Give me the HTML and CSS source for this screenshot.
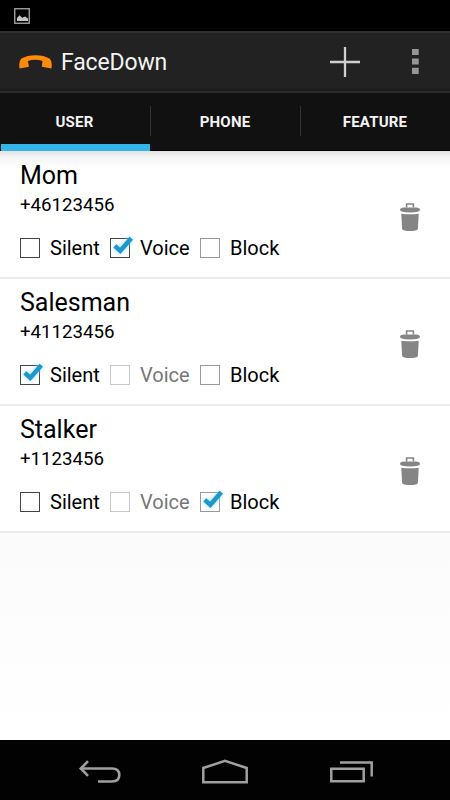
FILE: index.html
```html
<!DOCTYPE html>
<html lang="en">
<head>
    <meta charset="UTF-8">
    <meta name="viewport" content="width=device-width, initial-scale=1.0">
    <title>FaceDown</title>
    <link rel="stylesheet" href="styles.css">
</head>
<body>
    <svg class="symbols" width="0" height="0">
        <symbol id="check" viewBox="0 0 24 24">
            <path d="M3.8 10.8 L9.3 15.8 L20.3 3.3" fill="none" stroke="#1c98cb" stroke-width="4.4"/>
        </symbol>
        <symbol id="trash" viewBox="0 0 20 28">
            <path d="M6.6 4.5 V1 H13.4 V4.5" fill="none" stroke="#858585" stroke-width="1.6"/>
            <path d="M0 7 Q0 5 4 4.6 H16 Q20 5 20 7 Q20 9.2 10 9.4 Q0 9.2 0 7 Z" fill="#858585"/>
            <path d="M1.3 10.7 Q10 12 18.7 10.7 L17.9 26 Q17 28 10 28 Q3 28 2.1 26 Z" fill="#858585"/>
        </symbol>
    </svg>

    <div class="status-bar">
        <svg width="16" height="16" viewBox="0 0 16 16">
            <rect x="0.75" y="0.75" width="14.5" height="14.5" fill="none" stroke="#aaa" stroke-width="1.3"/>
            <path d="M3 13 V10 L5.5 7.2 L8.3 9.8 L11 8.6 L14 10.6 V13 Z" fill="#c4c4c4"/>
        </svg>
    </div>

    <header class="action-bar">
        <svg class="logo" width="33" height="14" viewBox="0 0 33 14">
            <path d="M0.5 13.4 Q-0.6 6.5 2.5 3.6 Q8 0.2 16.5 0.2 Q25 0.2 30.5 3.6 Q33.6 6.5 32.5 13.4 L22.8 11.8 L23.5 6 Q16.5 3.6 8.8 6 L10 11.8 Z" fill="#ff8a0c"/>
        </svg>
        <h1>FaceDown</h1>
        <svg class="add" width="30" height="30" viewBox="0 0 30 30">
            <path d="M15 0 V30 M0 15 H30" stroke="#d0d0d0" stroke-width="2.3"/>
        </svg>
        <svg class="more" width="7" height="26" viewBox="0 0 7 26">
            <path d="M0 0 H6.7 V6 H0 Z M0 9.4 H6.7 V15.4 H0 Z M0 18.8 H6.7 V25 H0 Z" fill="#969696"/>
        </svg>
    </header>

    <nav class="tabs">
        <div class="tab active">USER</div>
        <div class="tab">PHONE</div>
        <div class="tab">FEATURE</div>
    </nav>

    <main>
        <div class="contact">
            <div class="info">
                <div class="name">Mom</div>
                <div class="number">+46123456</div>
                <div class="options">
                    <div class="option"><span class="box"></span>Silent</div>
                    <div class="option"><span class="box"><svg class="tick"><use href="#check"/></svg></span>Voice</div>
                    <div class="option"><span class="box gray"></span>Block</div>
                </div>
            </div>
            <svg class="trash"><use href="#trash"/></svg>
        </div>
        <div class="contact">
            <div class="info">
                <div class="name">Salesman</div>
                <div class="number">+41123456</div>
                <div class="options">
                    <div class="option"><span class="box"><svg class="tick"><use href="#check"/></svg></span>Silent</div>
                    <div class="option disabled"><span class="box"></span>Voice</div>
                    <div class="option"><span class="box gray"></span>Block</div>
                </div>
            </div>
            <svg class="trash"><use href="#trash"/></svg>
        </div>
        <div class="contact">
            <div class="info">
                <div class="name">Stalker</div>
                <div class="number">+1123456</div>
                <div class="options">
                    <div class="option"><span class="box"></span>Silent</div>
                    <div class="option disabled"><span class="box"></span>Voice</div>
                    <div class="option"><span class="box gray"><svg class="tick"><use href="#check"/></svg></span>Block</div>
                </div>
            </div>
            <svg class="trash"><use href="#trash"/></svg>
        </div>
    </main>

    <footer class="nav-bar">
        <svg width="42" height="23" viewBox="0 0 42 23" fill="none" stroke="#a0a0a0" stroke-width="2.6">
            <path d="M1.5 8.5 H33 Q40.3 8.5 40.3 15 Q40.3 21.5 33 21.5 H19"/>
            <path d="M9 1.2 L1.8 8.5 L9 15.8"/>
        </svg>
        <svg width="46" height="25" viewBox="0 0 46 25" fill="none" stroke="#a0a0a0" stroke-width="2.5">
            <path d="M1.3 22.3 V8 L23 0.9 L44.7 8 V22.3 Z"/>
        </svg>
        <svg width="44" height="23" viewBox="0 0 44 23" fill="none" stroke="#a0a0a0" stroke-width="2.5">
            <path d="M2.3 8.7 H34.7 V21.3 H2.3 Z"/>
            <path d="M11 2.5 H42.7 V16.5"/>
        </svg>
    </footer>
</body>
</html>
```

FILE: styles.css
```css
* {
    box-sizing: border-box;
}

body {
    display: flex;
    flex-direction: column;
    height: 800px;
    margin: 0;
    background-color: #000;
    font-family: Roboto, 'Liberation Sans', sans-serif;
}

svg {
    display: block;
    flex: none;
    overflow: visible;
}

.symbols {
    height: 0;
}

.status-bar {
    height: 31px;
    padding: 8px 14px;
}

.action-bar {
    display: flex;
    align-items: center;
    height: 62px;
    padding: 0 31px 0 19px;
    background-color: #222;
    border-top: 2px solid #303030;
    border-bottom: 2px solid #2b2b2b;
    box-shadow: inset 0 -2px 0 #1c1c1c;
}

.action-bar h1 {
    flex: 1;
    margin: 0 0 0 9px;
    color: #f3f3f3;
    font-size: 23px;
    font-weight: 400;
    letter-spacing: -0.15px;
}

.add {
    margin-right: 52px;
}

.tabs {
    display: flex;
    height: 58px;
    background-color: #111;
    border-bottom: 1px solid #000;
}

.tab {
    position: relative;
    flex: 1;
    height: 58px;
    color: #f3f3f3;
    font-size: 15px;
    font-weight: 700;
    letter-spacing: 0.2px;
    line-height: 58px;
    text-align: center;
}

.tab + .tab::before {
    content: "";
    position: absolute;
    left: 0;
    top: 13px;
    width: 1px;
    height: 30px;
    background-color: #333;
}

.tab.active {
    margin-left: 1px;
    padding-right: 2px;
    flex: 0 0 149px;
    box-shadow: inset 0 -7px 0 #33b5e5;
}

main {
    flex: 1;
    background: linear-gradient(#f4f4f4, #fff);
}

.contact {
    display: flex;
    align-items: flex-start;
    height: 127px;
    padding: 8px 30px 0 20px;
    background-color: #fff;
    border-bottom: 2px solid #ebebeb;
    color: #000;
}

.contact:first-child {
    height: 128px;
    padding-top: 9px;
    background: linear-gradient(#e2e2e2, #f4f4f4 6px, #fff 16px);
}

.info {
    flex: 1;
}

.name {
    font-size: 25px;
    line-height: 32px;
}

.number {
    height: 25px;
    font-size: 18.7px;
    line-height: 26px;
}

.options {
    display: grid;
    grid-template-columns: 90px 90px 90px;
    margin-top: 19px;
}

.option {
    display: flex;
    align-items: center;
    gap: 10px;
    height: 24px;
    font-size: 20px;
}

.option.disabled {
    color: #777;
}

.box {
    position: relative;
    width: 20px;
    height: 20px;
    border: 1px solid #444;
}

.box.gray {
    border-color: #999;
}

.disabled .box {
    border-color: #c8c8c8;
}

.tick {
    position: absolute;
    left: 0;
    top: -4px;
    width: 24px;
    height: 24px;
    filter: drop-shadow(0 0 2px #8fd8f5);
}

.trash {
    width: 20px;
    height: 28px;
    margin-top: 43px;
}

.nav-bar {
    display: flex;
    gap: 81px;
    align-items: flex-start;
    height: 60px;
    padding: 20px 0 0 79px;
    background-color: #020202;
}
```
